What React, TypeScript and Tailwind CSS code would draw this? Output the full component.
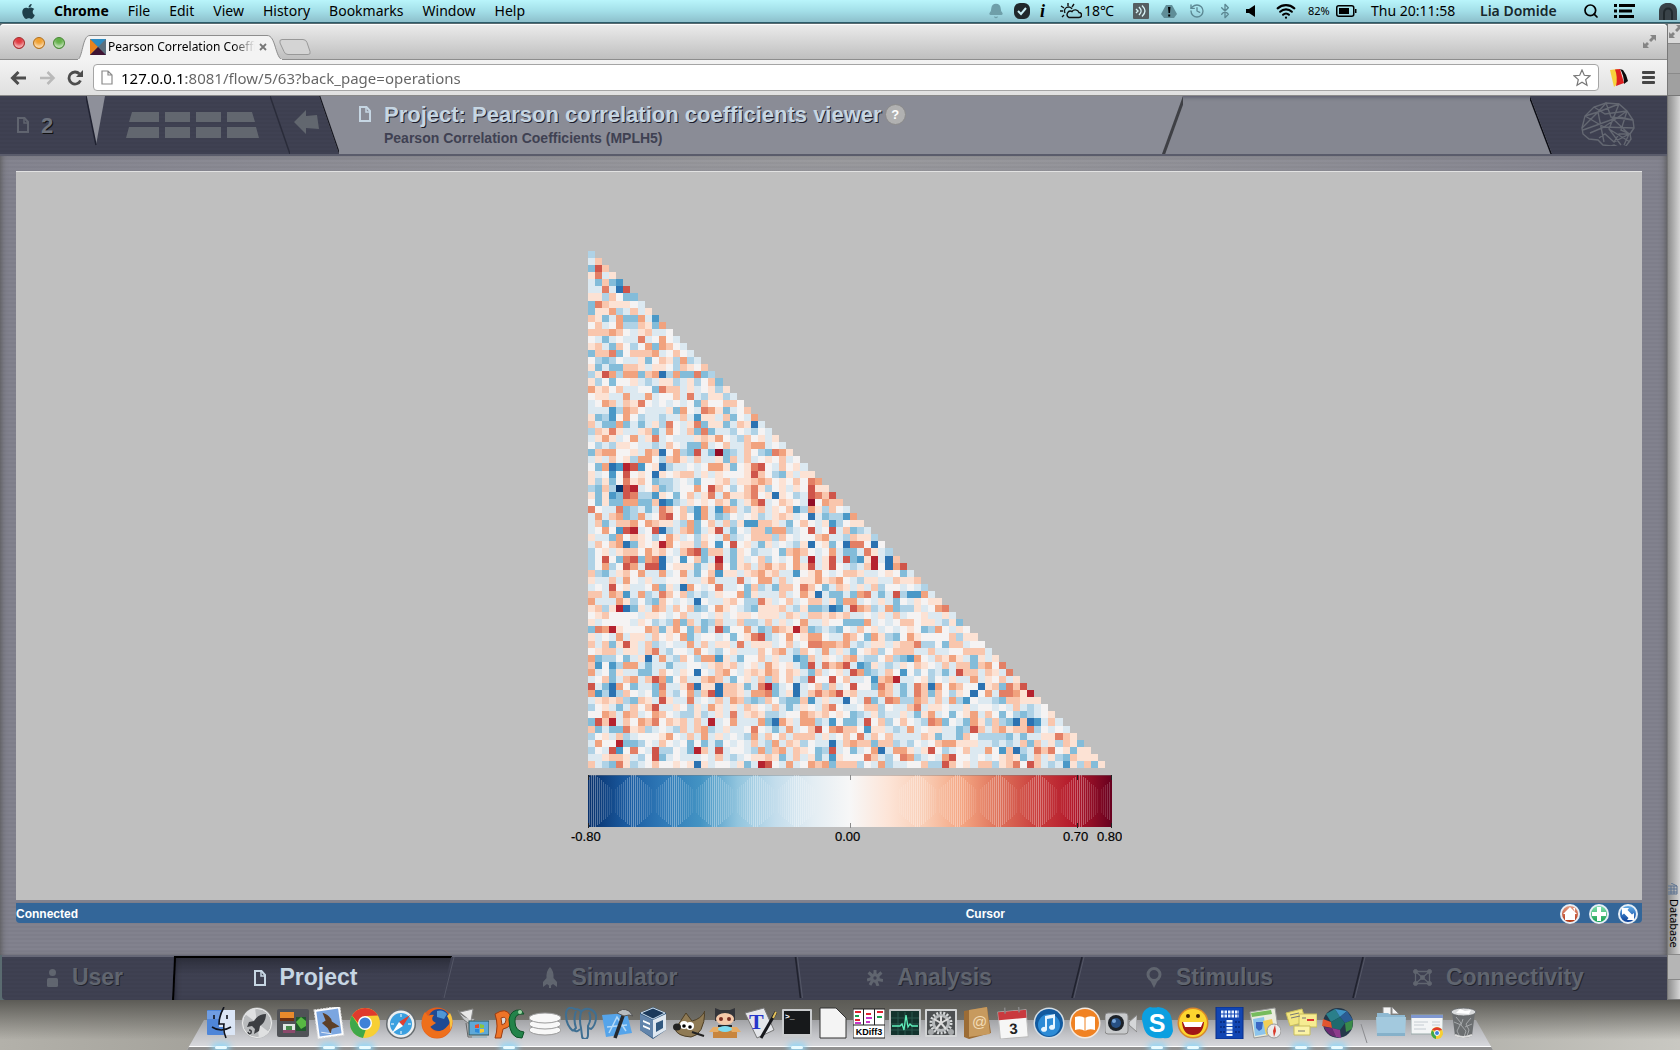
import React from "react";
import { Bell, History, Bluetooth, Search, Wifi } from "lucide-react";
import { FaApple } from "react-icons/fa";

const UI = "font-['Noto_Sans',sans-serif]";
const HELV = "font-['Liberation_Sans',Arial,sans-serif]";

/* ------------------------------------------------------------------ */
/* Correlation matrix, lower triangle: one character per cell, in      */
/* groups of ten. 0 = most negative, 6 = zero, d = most positive.      */
/* ------------------------------------------------------------------ */
const MATRIX = `
4
58
3b8
7a57
53832
55a51b
7748633
3a877765
377945857
8735933952
6856944873 9
8889865785 56
6535655a56 965
7853864693 9865
388a368889 56865
6434655736 874945
7353388757 7648768
47b9499389 14933a34
7463667545 774574683
9786855663 a885756747
6775595595 668 5a547745
5698587a65 656563866886 3
5552498655 57396 5a973568
7342696455 455852775836 59
8533935357 4a657a377358 7158
487a755783 596583a355465 465
5797569 57a 5655578796548 6757
64547765 54 58653395685589 9565
38996 67598 16943b53d34586 43a97
5758674996 489758557385856 7685 69
63912cb267 1455656997367 ab65867 5
75626b6761 767885757666 7b86437577
7473 6a7863 4456536678 5778986768 6a9
43840bc568 34566 96b86 468a746757 6b77
73723ba442 7636857a59 778a671764 5ba8b
6373399338 1245767687 3579b56876 5d6988
a6 55a34535 a868429529 854785768 2 497486 5
5958934956 ab68629534 6567457875 6153442 9
5835889698 7754936858 4722887536 8657246 7
5696 2bc56b 1458935 7b5 3658839945 6b56b58 345
7553968764 6975647659 4568884865 6689554 8774
5868 9137 67 c96774862 6 b675375654 71673 61 aa616
4675788697 8658ab3885 3764556389 8656953 35a754
46b63ab39a 1562683 5c5 3756846569 5c57b5b 327c518
46946b95bb 16777357b6 37858978 69 7b57b65 458c619b
8435786955 9569536827 7578978552 6796568 875567635
7558596575 5667557955 5a56995856 7797896 5477558778
565b675569 3751965 6a5 5638453886 a863587 57584665654
8859825945 a86845457 6 6937555856 9715335 3 9a535b42295 8
955597464 3 8656516557 8644a75685 6885739 9565753657677
7847c13759 8586834697 6543777854 7334125 b984593447569a
6786666577 6568556575 6776777587 5887878 55657585667557 5
7566665764 5493853485 5844585756 9557663 3395656886775473 8
3a9c766698 3796383 5b3 6695349 87c 8345436 58675656 763496576
7565957758 676935 6656 367ab45696 7996559 8639743697666684 7
8583 7b7584 5655958577 5a5777568 5 6aa9989 545775788a446388566
6788577 58a 5466596546 7555868954 8659575 36784688855855668885 6
9344 635715 9548649927 5366857552 3857658 954468432965879753757
826249953 5 5355665787 8567597675 3b5a89b 52375457687658588389 6a
956375 5335 8657616589 6578798687 5385675 b93458626464535b885875a 9
5683589 58b 9368558985 3675848685 4b66b68 5562 89c55674657559 576 85
b53196355 3 a557a17718 8735ac3561 568 4856 b663a8535a8196986617 83a8b6
924148656 3 9546948b18 87599a3571 58a89b7 85559853 5a83 8647616 95aa97c
578784387 5 b755a56585 9843486433 8257551 65a35a9449858594265 5438 8
467535868b 5576475975 7587658535 765 8a65 568846558a57765575665 6585 4 565
6698598569 8654474575 a5787445 66 9878676 3457455753795636 795863643 456
3b8c58698a 6878585c 56 955593197 599 45263 3 5b68468 65 4a93653974843181258 5
83533a7845 6548589457 556a653595 68b69a8 8627754595677553 4b85897 88a465 65
4675845666 7965859575 6549586858 8857568 6a586855 5587355386 4444 3535 577a87
5966c33465 8656363536 5658549587 465515 8 9883884546 56899777554545 8385748 735
465b26a65b 446 53c85b5 6654948958 7634b56 356915 9975 7b64568 5596281 45a8a673
5578875 46b 3565556585 4567787358 573527 6 66a854 6a94565 9b66565 6787358574 387
8543a74568 667671756 6 5735cb6595 6989388 8465945566 844b867588 478a6b8545 274837
`
  .trim()
  .split("\n")
  .map((row) => row.replace(/\s/g, ""));

const LEVELS: Record<string, string> = {
  "0": "#08336b", "1": "#2b72b1", "2": "#4a98c7", "3": "#83bcd9", "4": "#afd2e6", "5": "#dce9f1", "6": "#f5f3f3",
  "7": "#fce2d4", "8": "#f9c6ad", "9": "#f1a27e", a: "#e37f65", b: "#cf554a", c: "#b5222f", d: "#920d26",
};
const N = 73;
const X0 = 588;
const X1 = 1105;
const Y0 = 251;

function Heatmap() {
  const step = (X1 - X0) / N;
  const edge = (i: number) => Math.round(i * step);
  const cells: React.ReactNode[] = [];
  for (let r = 0; r < N; r++) {
    const row = MATRIX[r] ?? "";
    for (let c = 0; c <= r; c++) {
      const ch = row[c] ?? "7";
      cells.push(
        <rect key={r * 100 + c} x={X0 + edge(c)} y={Y0 + edge(r)} width={edge(c + 1) - edge(c)} height={edge(r + 1) - edge(r)} fill={LEVELS[ch]} />,
      );
    }
  }
  const hatch: React.ReactNode[] = [];
  [593, 633, 674, 714, 755, 796, 917, 957, 998, 1038, 1079, 1119].forEach((cx) => {
    for (let d = -18; d <= 18; d += 2) {
      const x = cx + d;
      if (x < 588 || x > 1110) continue;
      const a = Math.abs(d);
      const h = 52 - Math.max(0, a - 2) * 1.7;
      hatch.push(<rect key={cx + "_" + d} x={x} y={801 - h / 2} width={1} height={h} fill="#fff" opacity={0.36 - a * 0.015} />);
    }
  });
  return (
    <svg viewBox="536 247 586 600" className="w-[586px] shrink-0" role="img" aria-label="Pearson correlation matrix">
      <defs>
        <linearGradient id="rdbu">
          {["#08306b", "#1a5a9f", "#2f79b7", "#4393c3", "#92c5de", "#c3ddec", "#e3edf3", "#f7f7f7", "#fde5d8", "#f9cdb5", "#f4a582", "#dd7059", "#c93e3d", "#b2182b", "#67001f"].map((c, i, a) => (
            <stop key={c} offset={i / (a.length - 1)} stopColor={c} />
          ))}
        </linearGradient>
      </defs>
      <g shapeRendering="crispEdges">
        {cells}
        <rect x={588} y={775} width={524} height={52} fill="url(#rdbu)" />
        <rect x={588} y={775} width={524} height={1} fill="#777" opacity={0.4} />
        {hatch}
        {[588, 850, 1077, 1111].map((x) => (
          <g key={x} fill={x === 850 ? "#8b8b8b" : "#222"}>
            <rect x={x} y={775} width={1} height={5} />
            <rect x={x} y={823} width={1} height={5} />
          </g>
        ))}
      </g>
      <g className={HELV} fontSize={13} fill="#000" stroke="#000" strokeWidth={0.2}>
        <text x={571} y={841}>-0.80</text>
        <text x={835} y={841}>0.00</text>
        <text x={1063} y={841}>0.70</text>
        <text x={1097} y={841}>0.80</text>
      </g>
    </svg>
  );
}

/* ------------------------------------------------------------------ */
/* Small drawings                                                      */
/* ------------------------------------------------------------------ */
const DocIcon = ({ className }: { className?: string }) => (
  <svg viewBox="0 0 12 16" className={className} fill="none" stroke="currentColor" strokeWidth="2">
    <path d="M1 1h6.5L11 5v10H1z" />
    <path d="M7 1v5h4" strokeWidth="1.5" />
  </svg>
);

const Brain = () => (
  <svg viewBox="0 0 54 44" className="w-[54px]" fill="none" stroke="#646872" strokeWidth="1.4">
    <path d="M1 26 4 14l9-9 12-4 13 1 8 7 6 9 1 8-4 6 1 5-5 7-6 2-6-3-3 1-8-1-5-5-9-1-6-5z" />
    <path d="M4 14 17 10l21-8M13 5l11 7 22-3M1 26l16-16 8-9 5 14 22 3M4 14l19 11 23-16M9 31l14-6 30 1M17 10l6 30M38 2 28 27l12 16M46 9l-6 19 9 4M2 28l36-13 14 3M28 27l21 13M30 15l18 17-15 8M18 36l6-4 9 8 5-8 10 0-5 11" />
  </svg>
);

const Slash = ({ className, lean = 10, dark = "#20222e", light = "#555868" }: { className?: string; lean?: number; dark?: string; light?: string }) => (
  <svg viewBox="0 0 20 44" preserveAspectRatio="none" className={"absolute top-0 h-full w-5 " + (className ?? "")} fill="none" aria-hidden="true">
    <path d={`M${10 + lean / 2} 0L${10 - lean / 2} 44`} stroke={dark} strokeWidth="1.6" />
    <path d={`M${12 + lean / 2} 0L${12 - lean / 2} 44`} stroke={light} strokeWidth="1" />
  </svg>
);

/* ------------------------------------------------------------------ */
/* Menu bar                                                            */
/* ------------------------------------------------------------------ */
function MenuBar() {
  return (
    <header className={`flex h-[23px] items-center justify-between border-b border-[#2c5c6a] bg-gradient-to-b from-[#b9f5fb] via-[#a3dfe8] to-[#8dc0cc] text-sm text-black ${UI}`}>
      <nav className="flex items-center gap-[19px] pl-5">
        <FaApple className="-mr-0.5 size-[17px] text-[#1f3f4a]" />
        <button className="font-bold">Chrome</button>
        {["File", "Edit", "View", "History", "Bookmarks", "Window", "Help"].map((m) => (
          <button key={m}>{m}</button>
        ))}
      </nav>
      <div className="flex items-center pr-[3px]">
        <Bell className="size-4 fill-[#6f9fa9] text-[#6f9fa9]" />
        <span className="ml-2.5 flex size-4 items-center justify-center rounded-md bg-[#20282b]">
          <svg viewBox="0 0 10 10" className="size-2.5" fill="none" stroke="#c9eef4" strokeWidth="2"><path d="m1 5 3 3 5-6" /></svg>
        </span>
        <span className="ml-2.5 w-2 font-['Liberation_Serif',serif] text-lg font-bold italic leading-4">i</span>
        <svg viewBox="0 0 22 16" className="ml-3 w-[22px]" fill="none" stroke="#111" strokeWidth="1.4">
          <path d="M8 0v3M1 3l3 2M0 8h3M2 14l2-2M14 1l-2 3M5 10a4 4 0 1 1 7-4M9 14.5h10a2.5 2.5 0 0 0 0-5 4 4 0 0 0-7-1 3 3 0 0 0-3 6z" />
        </svg>
        <span className="ml-0.5 w-8">18℃</span>
        <svg viewBox="0 0 16 16" className="ml-[17px] size-4"><rect width="16" height="16" rx="1" fill="#555e61" /><path d="M3 6l2 2-2 2M6 4c3 3 3 5 0 8M9 2.5c4 4 4 7 0 11" fill="none" stroke="#d6f2f5" strokeWidth="1.4" /></svg>
        <svg viewBox="0 0 16 14" className="ml-3 w-4"><path d="M5 1h6l5 9-3 4H3l-3-4z" fill="#5f8d97" /><path d="M7 3h2.5L9 9H7.5zM7.2 10.5h2v2h-2z" fill="#000" /></svg>
        <History className="ml-3 size-4 text-[#5c8893]" />
        <Bluetooth className="ml-3 size-4 text-[#5c8893]" />
        <svg viewBox="0 0 9 12" className="ml-[13px] w-[9px]"><path d="M0 4h3l6-4v12L3 8H0z" fill="#000" /></svg>
        <Wifi className="ml-[21px] size-5 text-black" strokeWidth={2.6} />
        <span className="ml-3 w-6 text-[11px]">82%</span>
        <svg viewBox="0 0 21 12" className="ml-1 w-[21px]"><rect x=".75" y=".75" width="17" height="10.5" rx="2" fill="none" stroke="#000" strokeWidth="1.5" /><rect x="3" y="3" width="10" height="6" fill="#000" /><path d="M19 4h1.5v4H19z" /></svg>
        <span className="ml-3.5 w-[93px] whitespace-nowrap">Thu 20:11:58</span>
        <span className="ml-4 w-[83px] whitespace-nowrap font-semibold text-[#17282d]">Lia Domide</span>
        <Search className="ml-5 size-4 text-black" strokeWidth={2.6} />
        <svg viewBox="0 0 21 14" className="ml-[15px] w-[21px]"><path d="M0 0h3v3H0zM5 0h16v3H5zM0 5.5h3v3H0zM5 5.5h13v3H5zM0 11h3v3H0zM5 11h15v3H5z" /></svg>
        <svg viewBox="0 0 18 17" className="ml-6 w-[18px]"><path d="M0 17V8c0-11 18-11 18 0v9z" fill="#394248" /><path d="M5 17V10c0-6 8-6 8 0v7" fill="none" stroke="#20282c" strokeWidth="2" /></svg>
      </div>
    </header>
  );
}

/* ------------------------------------------------------------------ */
/* Browser chrome                                                      */
/* ------------------------------------------------------------------ */
const Arrows = () => (
  <svg viewBox="0 0 15 15" className="size-[15px]" fill="#858585"><path d="M8 1h6v6l-2-2-3 3-2-2 3-3zM1 8v6h6l-2-2 2-2-2-2-2 2z" /></svg>
);

function TabStrip() {
  const light = "size-3 rounded-full border shadow-[inset_0_-3px_3px_rgba(255,255,255,0.6)]";
  return (
    <div className="flex h-9 items-end justify-between rounded-t border-b border-[#8d8d8d] bg-gradient-to-b from-[#ececec] to-[#bfbfbf] shadow-[inset_0_1px_0_#fff]">
      <div className="flex items-end">
        <div className="flex w-[77px] items-center gap-2 pb-2.5 pl-[13px]">
          <button aria-label="Close window" className={`${light} border-[#a03030] bg-[#e0383f]`} />
          <button aria-label="Minimize window" className={`${light} border-[#b07020] bg-[#f0a030]`} />
          <button aria-label="Zoom window" className={`${light} border-[#4a8838] bg-[#62b048]`} />
        </div>
        <div className="relative flex h-6 w-[206px] items-center pl-[13px]">
          <svg viewBox="0 0 206 25" preserveAspectRatio="none" className="absolute inset-x-0 top-0 h-[25px] w-full" aria-hidden="true">
            <path d="M0 25C6 24 5 0 13 .5H190C199 0 198 24 206 25z" fill="#f3f3f3" stroke="#8d8d8d" />
            <path d="M1 25h204" stroke="#f3f3f3" strokeWidth="2" />
          </svg>
          <svg viewBox="0 0 16 16" className="relative size-4"><path d="M0 0h16v16H0z" fill="#5c6f7d" /><path d="M0 0h16L8 8z" fill="#2e8bc0" /><path d="M0 0l8 8-8 8z" fill="#e8821e" /><path d="M0 16l8-8 8 8z" fill="#3f1433" /></svg>
          <span className={`relative ml-0.5 w-[147px] whitespace-nowrap text-xs text-black [mask-image:linear-gradient(to_right,#000_85%,transparent)] ${UI}`}>Pearson Correlation Coeffi</span>
          <button aria-label="Close tab" className="relative ml-0.5 flex size-3 items-center justify-center">
            <svg viewBox="0 0 8 8" className="size-2" stroke="#777" strokeWidth="1.8"><path d="m1 1 6 6M7 1 1 7" /></svg>
          </button>
        </div>
        <button aria-label="New tab" className="-ml-1 mb-1">
          <svg viewBox="0 0 32 16" className="w-8"><path d="M3 .5h21q3 0 4 3l3 9q1 3-2 3H9q-3 0-4-3L1 4Q0 .5 3 .5z" fill="#d4d4d4" stroke="#989898" /></svg>
        </button>
      </div>
      <button aria-label="Full screen" className="mb-2.5 mr-2.5"><Arrows /></button>
    </div>
  );
}

function Toolbar() {
  return (
    <div className="flex h-9 items-center border-b border-[#8a8a8a] bg-gradient-to-b from-[#f3f3f3] to-[#e0e0e0] pl-2.5 pr-3">
      <button aria-label="Back"><svg viewBox="0 0 17 14" className="w-[17px]" fill="none" stroke="#4d4d4d" strokeWidth="3"><path d="M16 7H3M8.5 1 2.5 7l6 6" /></svg></button>
      <button aria-label="Forward" className="ml-3"><svg viewBox="0 0 17 14" className="w-[17px]" fill="none" stroke="#b9b9b9" strokeWidth="2.5"><path d="M1 7h13M8.5 1l6 6-6 6" /></svg></button>
      <button aria-label="Reload" className="ml-[11px]"><svg viewBox="0 0 16 16" className="size-4" fill="none" stroke="#4d4d4d" strokeWidth="2.8"><path d="M13.5 10.5A6 6 0 1 1 12.5 4" /><path d="M9 7h7V0z" fill="#4d4d4d" stroke="none" /></svg></button>
      <div className={`relative ml-2.5 flex h-[27px] min-w-0 flex-1 items-center rounded border border-[#a5a5a5] bg-white px-[7px] text-[15px] ${UI}`}>
        <svg viewBox="0 0 12 15" className="w-3" fill="none" stroke="#8b8b8b" strokeWidth="1.2"><path d="M1 1h6l4 4v9H1zM7 1v4h4" /></svg>
        <input
          aria-label="Address"
          defaultValue="127.0.0.1:8081/flow/5/63?back_page=operations"
          className="ml-2 min-w-0 flex-1 bg-transparent bg-gradient-to-r from-black from-[65px] to-[#636363] to-[65px] bg-clip-text leading-6 text-transparent caret-black outline-none"
        />
        <button aria-label="Bookmark"><svg viewBox="0 0 18 18" className="size-[18px]" fill="#fff" stroke="#777" strokeWidth="1.2"><path d="m9 1 2.3 5.3 5.7.5-4.3 3.8 1.3 5.7L9 13.3l-5 3 1.3-5.7L1 6.8l5.7-.5z" /></svg></button>
      </div>
      <button aria-label="Extension" className="ml-[11px]"><svg viewBox="0 0 18 18" className="size-[18px]"><path d="M0 1l8-1-1 15-3 3z" fill="#f7d23c" /><path d="M5 .5 10 0l4 14-8 3Q8 8 5 .5z" fill="#dc1f1f" /><path d="m10 0 3 1q4 5 5 11l-4 3q0-9-4-15z" fill="#0b0b0b" /></svg></button>
      <button aria-label="Menu" className="ml-3.5"><svg viewBox="0 0 13 13" className="w-[13px]" fill="#454545"><rect width="13" height="3" rx="1" /><rect y="5" width="13" height="3" rx="1" /><rect y="10" width="13" height="3" rx="1" /></svg></button>
    </div>
  );
}

/* ------------------------------------------------------------------ */
/* Page                                                                */
/* ------------------------------------------------------------------ */
const STRIPES = "bg-[repeating-linear-gradient(to_bottom,transparent_0,transparent_2px,rgba(0,0,0,0.03)_2px,rgba(0,0,0,0.03)_4px)]";

function ProjectHeader() {
  return (
    <div className={`flex h-[60px] border-b-2 border-[#5a5c6b] bg-[#3f4152] ${STRIPES} ${HELV}`}>
      <div className="relative flex w-[319px] shrink-0 items-center pl-[17px]">
        <DocIcon className="w-3 text-[#60646f]" />
        <span className="ml-3 w-3 text-[22px] font-bold text-[#6e737e] [text-shadow:1px_1px_0_#111]">2</span>
        <svg viewBox="0 0 20 50" className="ml-[33px] h-[50px] w-5 self-start"><path d="M0 0h19l-9 49z" fill="#8e909a" /><path d="M0 0l10 49" stroke="#1f2130" strokeWidth="1.5" /></svg>
        <svg viewBox="-3 0 133 26" className="ml-5 w-[133px]" fill="#62676f"><path d="M3 0h27v10H0zM36 0h25v10H36zM67 0h25v10H67zM98 0h25l3 10H98zM0 15h30v11H-3zM36 15h25v11H36zM67 15h25v11H67zM98 15h29l3 11H98z" /></svg>
        <svg viewBox="0 0 20 58" className="absolute left-[270px] top-0 h-full w-5" stroke="#2a2c3a" strokeWidth="1.5"><path d="M0 0l20 58" /></svg>
        <a href="#back" aria-label="Back" className="absolute left-[294px] top-3.5"><svg viewBox="0 0 25 24" className="w-[25px]" fill="#62676f"><path d="M0 12 12 0v6l11-1 2 14-13-1v6z" /></svg></a>
      </div>
      <div className="relative flex min-w-0 flex-1 bg-[#8a8c96] [clip-path:polygon(0_0,calc(100%-22px)_0,100%_100%,20px_100%)]">
        <svg viewBox="0 0 20 58" preserveAspectRatio="none" className="absolute left-0 top-0 h-full w-5" stroke="#15161f" strokeWidth="2.5"><path d="M0 0l20 58" /></svg>
        <div className="flex min-w-0 flex-1 pl-10 pt-2">
          <DocIcon className="mt-0.5 h-4 w-3 text-[#c6d6e3]" />
          <div className="ml-[13px]">
            <div className="flex items-center gap-[3px]">
              <h1 className="whitespace-nowrap text-[22px] font-bold leading-5 text-[#c6d6e3] [text-shadow:1px_1px_0_#1c1d2b]">Project: Pearson correlation coefficients viewer</h1>
              <button aria-label="Help" className="flex size-[21px] items-center justify-center rounded-full border border-[#8a8a8a] bg-[#b1b1b1] text-[13px] font-bold leading-none text-white">?</button>
            </div>
            <h2 className="mt-[5px] text-sm font-bold leading-4 text-[#3f4152]">Pearson Correlation Coefficients (MPLH5)</h2>
          </div>
        </div>
        <div className="w-[390px] bg-[#858791] shadow-[inset_0_3px_4px_-2px_#55576a] [clip-path:polygon(21px_0,100%_0,100%_100%,0_100%)]">
          <svg viewBox="0 0 21 58" preserveAspectRatio="none" className="h-full w-[21px]" stroke="#3f4045" strokeWidth="6"><path d="M21 0L0 58" /></svg>
        </div>
        <svg viewBox="0 0 22 58" preserveAspectRatio="none" className="absolute right-0 top-0 h-full w-[22px]" stroke="#0b0c14" strokeWidth="3"><path d="M0 0l22 58" /></svg>
      </div>
      <div className="w-[115px] shrink-0 pl-[29px] pt-1.5"><Brain /></div>
    </div>
  );
}

const TABS = [
  { name: "User", cls: "w-[170px] pr-1", icon: <svg viewBox="0 0 11 18" className="w-[11px]" fill="currentColor"><circle cx="5.5" cy="3.5" r="3.5" /><rect y="9" width="11" height="9" rx="1.5" /></svg>, slash: null },
  { name: "Project", cls: "w-[275px] pr-2", icon: <DocIcon className="w-3" />, slash: <Slash className="-right-2.5" dark="#3f4152" /> },
  { name: "Simulator", cls: "flex-[351] pr-6", icon: <svg viewBox="0 0 14 21" className="w-3.5" fill="currentColor"><path d="M7 0q4 4 3.5 11l3.5 4v5l-4-3q-3 3-6 0l-4 3v-5l3.5-4Q3 4 7 0z" /><path d="M6 17h2v4H6z" /></svg>, slash: <Slash className="-right-2.5" lean={-5} /> },
  { name: "Analysis", cls: "flex-[283] pr-4", icon: <svg viewBox="0 0 16 16" className="w-4" fill="none" stroke="currentColor" strokeWidth="3"><circle cx="8" cy="8" r="3.2" /><path d="M8 5V0M10.5 6l4-3.5M11 9.5l5 1M9 11l2 5M5.5 10.5 3 15M5 8.5 0 10M5 5.5 1.5 2.5" /></svg>, slash: <Slash className="-right-2.5" lean={10} /> },
  { name: "Stimulus", cls: "flex-[284] pr-4", icon: <svg viewBox="0 0 16 21" className="w-4" fill="none" stroke="currentColor" strokeWidth="3"><circle cx="8" cy="7.5" r="6" /><path d="M4 13l4 8 4-8z" fill="currentColor" stroke="none" /></svg>, slash: <Slash className="-right-2.5" lean={10} /> },
  { name: "Connectivity", cls: "flex-[302] pr-7", icon: <svg viewBox="0 0 19 17" className="w-[19px]" fill="currentColor" stroke="currentColor"><path d="M2.5 2.5h14v12h-14zM2.5 2.5l14 12M16.5 2.5l-14 12" fill="none" strokeWidth="1.3" /><circle cx="2.5" cy="2.5" r="2" /><circle cx="16.5" cy="2.5" r="2" /><circle cx="2.5" cy="14.5" r="2" /><circle cx="16.5" cy="14.5" r="2" /><circle cx="9.5" cy="8.5" r="2" /></svg>, slash: null },
];

function BottomNav() {
  return (
    <nav className={`ml-0.5 flex h-[45px] rounded-bl border-t-2 border-[#666877] bg-[#3f4152] pb-0.5 ${STRIPES} ${HELV}`}>
      {TABS.map((t) => {
        const active = t.name === "Project";
        return (
          <a
            key={t.name}
            href={"#" + t.name.toLowerCase()}
            className={`relative flex items-center justify-center gap-3.5 text-[23px] font-bold ${t.cls} ${active ? "text-[#c6d6e3]" : "text-[#60656f] [text-shadow:1px_1px_0_#23252f]"}`}
          >
            {active && (
              <span className="absolute -bottom-0.5 -right-[5px] -top-px left-0 border-t-2 border-black bg-gradient-to-b from-[#2d2f3c] to-transparent to-40% shadow-[inset_6px_0_6px_-4px_#1c1d28] [clip-path:polygon(2px_0,100%_0,calc(100%-10px)_100%,0_100%)]">
                <svg viewBox="0 0 4 44" preserveAspectRatio="none" className="h-full w-1" stroke="#000" strokeWidth="2"><path d="M3 0L1 44" /></svg>
              </span>
            )}
            <span className="relative">{t.icon}</span>
            <span className="relative">{t.name}</span>
            {t.slash}
          </a>
        );
      })}
    </nav>
  );
}

const round = "flex size-5 items-center justify-center rounded-full border-2 border-[#e6eef5]";

function ViewerPage() {
  return (
    <div className="flex flex-1 flex-col">
      <ProjectHeader />
      <div className="flex flex-1 flex-col bg-[#82828e] bg-[radial-gradient(ellipse_900px_60px_at_50%_0,#9c9c9f,transparent)]">
        <div className={`flex flex-1 flex-col pb-8 pl-4 pr-[25px] pt-[15px] shadow-[inset_5px_0_6px_-4px_#555,inset_-5px_0_6px_-4px_#555] ${STRIPES}`}>
          <div className="flex flex-1 items-center justify-center border-t border-[#e2e2e2] bg-[#bfbfbf] pt-[22px]">
            <Heatmap />
          </div>
          <div className={`mt-[3px] flex h-5 items-center justify-between rounded-b bg-[#336699] pt-px text-xs font-bold text-white ${HELV}`}>
            <div className="flex-[952]">Connected</div>
            <div className="flex flex-[674] items-center justify-between pr-1">
              <span>Cursor</span>
              <div className="flex gap-[9px]">
                <button aria-label="Home" className={`${round} bg-gradient-to-b from-[#e59a80] to-[#b03008]`}><svg viewBox="0 0 14 14" className="size-3.5" fill="#fff"><path d="m7 0 7 7h-2v6H2V7H0zM10 1h2v4z" /></svg></button>
                <button aria-label="Zoom" className={`${round} bg-gradient-to-b from-[#7de0ae] to-[#08a050]`}><svg viewBox="0 0 14 14" className="size-3.5" fill="#fff"><path d="M5 0h4v5h5v4H9v5H5V9H0V5h5z" /></svg></button>
                <button aria-label="Pan" className={`${round} bg-gradient-to-b from-[#63aeea] to-[#0a3c96]`}><svg viewBox="0 0 14 14" className="size-3.5" fill="#fff"><path d="M1 1h7L6.5 3l4.5 4.5L13 6v7H6l1.500-2L3 6.500 1 8z" /></svg></button>
              </div>
            </div>
          </div>
        </div>
      </div>
      <BottomNav />
    </div>
  );
}

function BackWindow() {
  return (
    <div className={`w-[13px] shrink-0 bg-[#c9c9c9] ${UI}`}>
      <div className="flex h-full flex-col border-l border-[#777] bg-gradient-to-r from-[#8e8e8e] to-[#d5d5d5]">
        <div className="h-5 overflow-hidden border-b border-[#888] bg-[#d9d9d9]"><Arrows /></div>
        <div className="h-[30px] border-b border-[#8a8a8a] bg-[#a5a5a5]" />
        <div className="h-[22px] border-b border-[#777] bg-[#a0a0a0]" />
        <div className="flex-1" />
        <svg viewBox="0 0 10 12" className="w-2.5" fill="none" stroke="#5c7390"><path d="M0 3h9v8H0M3 0l6 3M0 6h9M0 9h9M3 3v8M6 3v8" /></svg>
        <div className="mt-1 w-3 text-[11px] leading-3 text-black [writing-mode:vertical-rl]">Database</div>
        <div className="mt-1.5 h-[26px] border-y border-[#888] bg-[#b5b5b5]" />
        <div className="h-5 border-b border-[#777]" />
      </div>
    </div>
  );
}

/* ------------------------------------------------------------------ */
/* Dock                                                                */
/* ------------------------------------------------------------------ */
const APPS: { name: string; open?: boolean; art: React.ReactNode }[] = [
  { name: "Finder", open: true, art: <><rect x="2" y="3" width="28" height="25" rx="1" fill="#4f86d8" /><path d="M2 4h28v8H2z" fill="#8fb4ec" opacity=".5" /><path d="M18 3h12v25H19l-1-8h-4q0-9 4-17z" fill="#dbe6f6" /><path d="M19 0q-5 9-5 17h5q-1 7 2 14M7 20q9 6 19 0M9 8v4M22 8v4" fill="none" stroke="#10131c" strokeWidth="1.6" /></> },
  { name: "Launchpad", art: <><circle cx="16" cy="16" r="15.5" fill="#b9bbbd" /><circle cx="16" cy="16" r="14.500" fill="none" stroke="#eee" /><path d="M16 16 4 7a15 15 0 0 1 10-6zM16 16l12 9a15 15 0 0 1-10 6z" fill="#dfe0e1" /><path d="M25 7q-8 0-12 7l-5 1-2 5 5-1 3 3-1 5 5-3 1-5q6-4 6-12z" fill="#3c3e42" /><path d="M8 23q3 0 2 3-2 2-3-1" stroke="#3c3e42" fill="none" strokeWidth="1.500" /></> },
  { name: "Mission Control", art: <><rect x="0" y="2" width="32" height="28" rx="2" fill="#505257" /><rect x="3" y="5" width="14" height="9" fill="#e98a2c" /><path d="M3 11h14v3H3z" fill="#6d2f12" /><rect x="19" y="10" width="10" height="14" fill="#205a2d" /><path d="M19 15l5-5 5 4v5l-5 3z" fill="#58b843" /><rect x="6" y="17" width="12" height="9" fill="#dfe6e2" /><path d="M6 23h12v3H6z" fill="#8c4a6c" /><path d="M9 19h6v4H9z" fill="#478a4c" /></> },
  { name: "Mail", open: true, art: <g transform="rotate(-8 16 16)"><rect x="3" y="1" width="26" height="29" fill="#fff" stroke="#ddd" strokeDasharray="2 1" /><rect x="5" y="3" width="22" height="25" fill="#7ba6e0" /><path d="M11 5q8 4 8 10l7 6-8 1-2 5-2-6-5-6 4-2z" fill="#5d4028" /><path d="M7 24l10 3" stroke="#dfe8f5" /></g> },
  { name: "Chrome", open: true, art: <><circle cx="16" cy="16" r="15" fill="#f7cf33" /><path d="M3 8.5 10 19l7 3-3 9A15 15 0 0 1 3 8.5z" fill="#3fa84a" /><path d="M3 8.5A15 15 0 0 1 29 8.5L16 9l-6 8z" fill="#df3a2d" /><circle cx="16" cy="16" r="7" fill="#fff" /><circle cx="16" cy="16" r="5.600" fill="#3f82d8" /></> },
  { name: "Safari", art: <><path d="M14 0h4v3h-4z" fill="#666" /><circle cx="16" cy="17" r="15" fill="#666c70" /><circle cx="16" cy="17" r="13.500" fill="#eceff0" /><circle cx="16" cy="17" r="11" fill="#3ba0e0" /><path d="M25 8 18 19l-4-4z" fill="#e14030" /><path d="M7 26l7-11 4 4z" fill="#fff" /><path d="M16 7v3M16 24v3M6 17h3M23 17h3" stroke="#fff" /></> },
  { name: "Firefox", art: <><circle cx="16" cy="16" r="15.5" fill="#e25d1c" /><circle cx="18" cy="13" r="11" fill="#1f4a94" /><path d="M16 4q6-2 10 3l-3 5-7-2z" fill="#5096d6" /><path d="M31 12q2 12-9 18-14 4-20-8Q-1 12 4 5l3 4q3-2 6-1-3 3-1 6l3 2-6 4q5 7 13 3 6-4 9-11z" fill="#ee6f1c" /><path d="M29 6q5 9 0 17 1-8-3-14z" fill="#f9c440" /></> },
  { name: "Remote Desktop", art: <><path d="M1 3q5 13 14 14l3-5Q6 12 1 3z" fill="#c9cbcc" stroke="#777" /><path d="M3 5 16 2l-2 12" fill="#e8e8e8" stroke="#888" /><path d="M9 16l2 14h8" stroke="#666" fill="none" /><rect x="12" y="14" width="20" height="14" fill="#5ea9d8" stroke="#355" /><path d="M18 18l4-1v4h-4z" fill="#e74c2b" /><path d="M23 17l4 1v3h-4z" fill="#8cc63f" /><path d="M18 22h4v4l-4-1z" fill="#2d8ad8" /><path d="M23 22h4v3l-4 1z" fill="#fcc52b" /><path d="M15 29h15v2H15z" fill="#a6b9c2" /></> },
  { name: "Peppers", open: true, art: <><path d="M2 7q11-7 15 1 4 12-7 14l-2 9H2Q6 19 2 7z" fill="#ee7428" stroke="#9c3c10" /><path d="M8 11q5-2 5 2t-4 5z" fill="#d9dadc" stroke="#9c3c10" /><path d="M16 12q2-10 12-9l3 4q-10-1-9 8 0 9 9 10l-2 6q-13 1-13-19z" fill="#23834a" stroke="#0e5228" /><circle cx="27" cy="5" r="2" fill="#9fd7a5" /></> },
  { name: "Database", art: <>{[23, 17, 11].map((y) => <ellipse key={y} cx="16" cy={y} rx="16" ry="5" fill="#f8f8f8" stroke="#9a9a9a" />)}</> },
  { name: "PostgreSQL", art: <g fill="none" stroke="#3f6f92" strokeWidth="2"><path d="M8 24Q1 18 1 8t9-6q5 0 6 3 3-4 8-3 8 2 7 10-1 7-5 10l-3-1" /><path d="M11 4q-3 8 0 17l-3 3M16 5q-2 8 0 16l1 8q0 3 3 3t3-4v-9q4-7 1-14" /><path d="M15 22q-3 4-6 1" /></g> },
  { name: "Xcode", art: <><path d="M1 8 26 6l5 20-26 4z" fill="#55a4ea" /><path d="m8 26 8-16 9 14M6 20l20-2" stroke="#b5daf8" fill="none" strokeWidth="1.5" /><path d="M14 31 23 6" stroke="#26292e" strokeWidth="3.5" /><path d="M16 6q5-6 12-2l4 5-4-1-5 1z" fill="#b8bcc0" stroke="#555" /></> },
  { name: "VirtualBox", art: <><path d="M16 0l13 6v17l-13 9-13-9V6z" fill="#31587f" /><path d="M16 1l12 5-12 6L4 6z" fill="#1b3a5c" stroke="#cfe0ef" /><path d="M3 7l13 6v18L3 23z" fill="#6184ab" /><path d="M29 7l-13 6v18l13-8z" fill="#dfe8f1" /><path d="M6 13l7 3v2l-7-3zM6 18l7 3v2l-7-3z" fill="#fff" /><path d="M19 16l7-3v8l-7 4z" fill="#31587f" /></> },
  { name: "GIMP", art: <><path d="M7 15 13 6l6 8q9-2 13-10-1 24-14 26Q4 29 2 22z" fill="#8f7a54" stroke="#4d3f26" /><circle cx="11" cy="18" r="4" fill="#fff" /><circle cx="17" cy="19" r="4" fill="#fff" /><circle cx="11" cy="19" r="1.8" /><circle cx="17" cy="20" r="1.8" /><ellipse cx="4" cy="20" rx="4" ry="3.5" fill="#222" /><path d="M19 25l12 4" stroke="#222" strokeWidth="2" /></> },
  { name: "GitHub", art: <><path d="M6 14V1l5 2h10l5-2v13z" fill="#33353a" /><ellipse cx="16" cy="12" rx="9" ry="6" fill="#f4c9a9" /><circle cx="12" cy="12" r="2" fill="#7a2f22" /><circle cx="20" cy="12" r="2" fill="#7a2f22" /><path d="M9 18h14v5H9z" fill="#24262a" /><path d="M4 22h24v9H4z" fill="#c8853d" /><path d="M4 20 0 25h9l3-5zM28 20l4 5h-9l-3-5z" fill="#e7ad66" /><ellipse cx="16" cy="22" rx="7" ry="3" fill="#7fdcf0" /></> },
  { name: "TextWrangler", art: <><path d="M0 6 19 1l10 22-17 8z" fill="#e4e6ea" stroke="#777" /><text x="4" y="22" fontSize="22" fontWeight="700" fill="#2636c9" fontFamily="Liberation Serif, serif">T</text><path d="M31 5 16 31" stroke="#17181c" strokeWidth="3" /><path d="M31 5 28 11" stroke="#e5c35c" strokeWidth="2" /></> },
  { name: "Terminal", open: true, art: <><rect x="1" y="2" width="30" height="28" rx="1" fill="#c9cbcd" /><rect x="3" y="4" width="26" height="23" fill="#17191b" /><text x="4" y="12" fontSize="8" fontWeight="700" fill="#fff" fontFamily="Liberation Mono, monospace">&gt;_</text></> },
  { name: "Document", art: <path d="M3 1h16l10 10v20H3z" fill="#f4f4f4" stroke="#333" /> },
  { name: "KDiff3", art: <><rect x="0" y="2" width="32" height="29" fill="#fff" stroke="#222" /><path d="M10.5 2v16M21.5 2v16M0 18h32" stroke="#222" /><path d="M2 5h6M2 13h5M13 7h5M24 5h6" stroke="#e0222e" strokeWidth="2" /><path d="M2 9h4M24 10h5" stroke="#18a04a" strokeWidth="2" /><path d="M2 16h6M13 11h6M13 15h4" stroke="#c936c9" strokeWidth="2" /><text x="16" y="28" fontSize="9" fontWeight="700" textAnchor="middle" fontFamily="Liberation Sans, sans-serif">KDiff3</text></> },
  { name: "Activity Monitor", art: <><rect x="0" y="2" width="32" height="28" rx="1" fill="#c1c4c5" /><rect x="2" y="4" width="28" height="24" fill="#12322c" /><path d="M2 11h28M2 17h28M2 23h28M9 5v23M16 5v23M23 5v23" stroke="#28564c" /><path d="M3 19h8l2-2 2 6 2-15 2 12 2-3 2 2h6" fill="none" stroke="#5ff2bd" strokeWidth="1.3" /></> },
  { name: "System Preferences", art: <><rect x="0" y="2" width="32" height="28" rx="1" fill="#d2d4d5" /><rect x="2" y="4" width="28" height="24" fill="#4d5052" /><circle cx="16" cy="16" r="10" fill="none" stroke="#d7dadb" strokeWidth="3" strokeDasharray="2 1.500" /><circle cx="16" cy="16" r="7.500" fill="none" stroke="#b6b9bb" strokeWidth="3" /><path d="M16 16 9 12M16 16V9M16 16l7-4M16 16l5 6M16 16l-5 6" stroke="#ddd" strokeWidth="2" /><circle cx="6" cy="25" r="3" fill="#a6a9ab" /><circle cx="26" cy="25" r="3" fill="#a6a9ab" /></> },
  { name: "Contacts", art: <><path d="M3 4 26 0l4 26-22 6-5-2z" fill="#9c6c35" /><path d="M8 3 26 0l3 27-21 3z" fill="#c79a5e" /><text x="11" y="20" fontSize="15" fill="#f3dcb5" fontFamily="Liberation Sans, sans-serif">@</text></> },
  { name: "Calendar", art: <g transform="rotate(-5 16 16)"><rect x="2" y="4" width="28" height="27" fill="#f6f6f6" stroke="#bbb" /><path d="M2 4h28v8H2z" fill="#c93a3e" /><path d="M9 0v6M23 0v6" stroke="#888" strokeWidth="1.5" /><text x="16" y="27" fontSize="15" fontWeight="700" textAnchor="middle" fill="#222" fontFamily="Liberation Sans, sans-serif">3</text></g> },
  { name: "iTunes", art: <><circle cx="16" cy="16" r="15.5" fill="#d4dde4" /><circle cx="16" cy="16" r="14" fill="#125a9f" /><circle cx="16" cy="18" r="11" fill="#2c8bd6" /><path d="M12 9l10-2v13a3 2.5 0 1 1-2-2v-7l-6 1v10a3 2.5 0 1 1-2-2z" fill="#e6f5ff" /></> },
  { name: "iBooks", art: <><circle cx="16" cy="16" r="15.5" fill="#f4e9df" /><circle cx="16" cy="16" r="14" fill="#f08223" /><path d="M6 10q6-2 10 1 4-3 10-1v13q-6-2-10 1-4-3-10-1z" fill="#fff" /><path d="M16 11v13" stroke="#f08223" /></> },
  { name: "FaceTime", art: <><rect x="0" y="6" width="23" height="21" rx="3" fill="#c8cacc" stroke="#888" /><circle cx="11" cy="16" r="8" fill="#1d2228" /><circle cx="11" cy="16" r="5" fill="#274f82" /><circle cx="9" cy="14" r="2" fill="#79a6d8" /><path d="M24 15l8-7v17l-8-7z" fill="#d5d7d9" stroke="#888" /></> },
  { name: "Skype", open: true, art: <><path d="M9 0q5 1 8 0 13 1 14 15l1 9q-2 9-10 7Q4 33 2 17-2 4 9 0z" fill="#0b9fe0" /><text x="16" y="25" fontSize="25" fontWeight="700" textAnchor="middle" fill="#fff" fontFamily="Liberation Sans, sans-serif">S</text></> },
  { name: "Messenger", open: true, art: <><circle cx="16" cy="16" r="15.5" fill="#d8882a" /><circle cx="16" cy="16" r="14" fill="#fcd52f" /><circle cx="11" cy="9" r="2" fill="#402005" /><circle cx="21" cy="9" r="2" fill="#402005" /><path d="M5 15h22q-1 13-11 13T5 15z" fill="#a21616" /><path d="M6 15h20l-2 5H8z" fill="#fff" /></> },
  { name: "Dots", art: <><rect x="3" width="27" height="32" fill="#1045b3" stroke="#0a2f86" /><path d="M8 5h18M8 9h18M15 13v16M18 13v16" stroke="#e7f2ff" strokeWidth="3" strokeDasharray="2.5 1" /><path d="M7 15h6M7 20h6M7 25h6M22 15h5M22 20h5M22 25h5" stroke="#0a2f86" strokeWidth="2" strokeDasharray="2 1" /></> },
  { name: "Maps", art: <><path d="M1 5 26 1l4 26-25 4z" fill="#e9ecdf" stroke="#999" /><path d="M2 6l20-3 1 4L3 10z" fill="#76bb5d" /><path d="M4 12l11-2 2 17-11 2z" fill="#8cc4ec" /><path d="M14 14l9-2 3 14-9 2z" fill="#f3cf57" /><path d="M7 15h7l-1 7-3 2-3-3z" fill="#3b67c4" /><circle cx="25" cy="24" r="7" fill="#ececec" stroke="#999" /><path d="M26 18l1 6-2 6-1-6z" fill="#d83a2b" /></> },
  { name: "Stickies", open: true, art: <><path d="M1 6 17 2l4 13-16 4z" fill="#f2e681" stroke="#c8bd5c" /><path d="M14 7h18v13H14z" fill="#f6ec92" stroke="#c8bd5c" /><path d="M9 19h16v9H9z" fill="#fbf3a6" stroke="#c8bd5c" /><path d="M5 8l9-2M6 11l9-2M17 11h4M13 24h7" stroke="#777" /><path d="M22 13h7" stroke="#d33" strokeWidth="2" /></> },
  { name: "Globe", open: true, art: <><circle cx="17" cy="16" r="15" fill="#24384a" /><path d="M5 7 14 2l5 8-9 5z" fill="#2a7f8a" /><path d="M14 2l12 2-7 6z" fill="#3f93c4" /><path d="M26 4l6 9-8 3-5-6z" fill="#2b5c94" /><path d="M24 16l8-3-1 9-6 3z" fill="#3a8b49" /><path d="M10 15l9-5 5 6-5 7-8-2z" fill="#1e6a6e" /><path d="M2 12l8 3 1 6-10-2z" fill="#e2552f" /><path d="M3 20l8 1 4 9q-8-1-12-10z" fill="#6a2b72" /><path d="M11 21l8 2 1 8-5-1z" fill="#8e3a8c" /></> },
];

const TRAY: { name: string; art: React.ReactNode }[] = [
  { name: "Documents", art: <><path d="M8 0h8v8H8zM17 0l7 7h-7z" fill="#f4f4f4" stroke="#888" /><path d="M2 6h11l3 2h14v8H2z" fill="#8fb9d2" /><path d="M1 10h30l-1 19H2z" fill="#a3c9de" /><path d="M2 26h28v3H2z" fill="#86b1ca" /></> },
  { name: "Chrome windows", art: <><rect x="0" y="8" width="32" height="19" fill="#f3f5f6" stroke="#9aa" /><path d="M0 8h32v3H0z" fill="#7f97cf" /><path d="M3 15h14M3 18h10M21 15h8M21 18h8M3 22h12" stroke="#c5ccd2" /><circle cx="26" cy="26" r="6" fill="#f7cf33" /><path d="M21 23a6 6 0 0 1 10 0l-5 1z" fill="#df3a2d" /><path d="M21 23l4 5 0 4a6 6 0 0 1-4-9z" fill="#3fa84a" /><circle cx="26" cy="26" r="2.5" fill="#3f82d8" stroke="#fff" /></> },
  { name: "Trash", art: <><path d="M5 5h23l-3 24q-8 4-17 0z" fill="#6b6e70" /><path d="M9 10l5 6-4 8 3 6M16 12l-2 6 5 6-2 6M24 11l-5 6 3 6-2 6M7 15l7 3M18 20l7-3" stroke="#a4a7a9" fill="none" /><path d="M8 28q8 4 17 0" stroke="#ddd" strokeWidth="2" fill="none" /><ellipse cx="16.5" cy="5" rx="12.5" ry="4" fill="#d9dbdc" stroke="#66696b" /><path d="M9 6l4-4 5 2 6-1-2 4z" fill="#fff" /></> },
];

function DockIcon({ name, open, art }: { name: string; open?: boolean; art: React.ReactNode }) {
  return (
    <button aria-label={name} className="relative h-8 w-8 shrink-0">
      <svg viewBox="0 0 32 32" className="size-8">{art}</svg>
      {open && <span className="absolute left-2.5 top-[39px] h-[3px] w-3 rounded-full bg-[#e9fbff] shadow-[0_0_6px_3px_#8fd4f5]" />}
    </button>
  );
}

function Dock() {
  return (
    <footer className="relative h-[50px] overflow-hidden bg-gradient-to-r from-[#b3b1aa] via-[#77766f] to-[#c9c8c2]">
      <div className="absolute inset-x-0 top-0 h-10 bg-gradient-to-b from-[#5c5b56] to-transparent" />
      <div className="relative mx-auto flex h-full w-[1306px] justify-center gap-1 pl-[3px] pt-[7px]">
        <div className="absolute inset-x-0 bottom-0 h-[30px] bg-gradient-to-b from-[#a2a3a6] via-[#c3c4c8] to-[#dfe0e4] [clip-path:polygon(17px_0,calc(100%-17px)_0,100%_100%,0_100%)]">
          <div className="absolute inset-x-0 bottom-0 h-1 border-t border-white bg-[#919191]" />
        </div>
        {APPS.map((a) => <DockIcon key={a.name} {...a} />)}
        <div className="relative w-3.5 shrink-0"><svg viewBox="0 0 14 40" className="w-3.5" stroke="#8b8c90"><path d="M4 17l6 19" /></svg></div>
        {TRAY.map((a) => <DockIcon key={a.name} {...a} />)}
      </div>
    </footer>
  );
}

export default function App() {
  return (
    <div className="flex min-h-screen flex-col bg-[#5a6b70]">
      <MenuBar />
      <div className="flex flex-1 pt-px">
        <main className="flex min-w-0 flex-1 flex-col">
          <TabStrip />
          <Toolbar />
          <ViewerPage />
        </main>
        <BackWindow />
      </div>
      <Dock />
    </div>
  );
}
